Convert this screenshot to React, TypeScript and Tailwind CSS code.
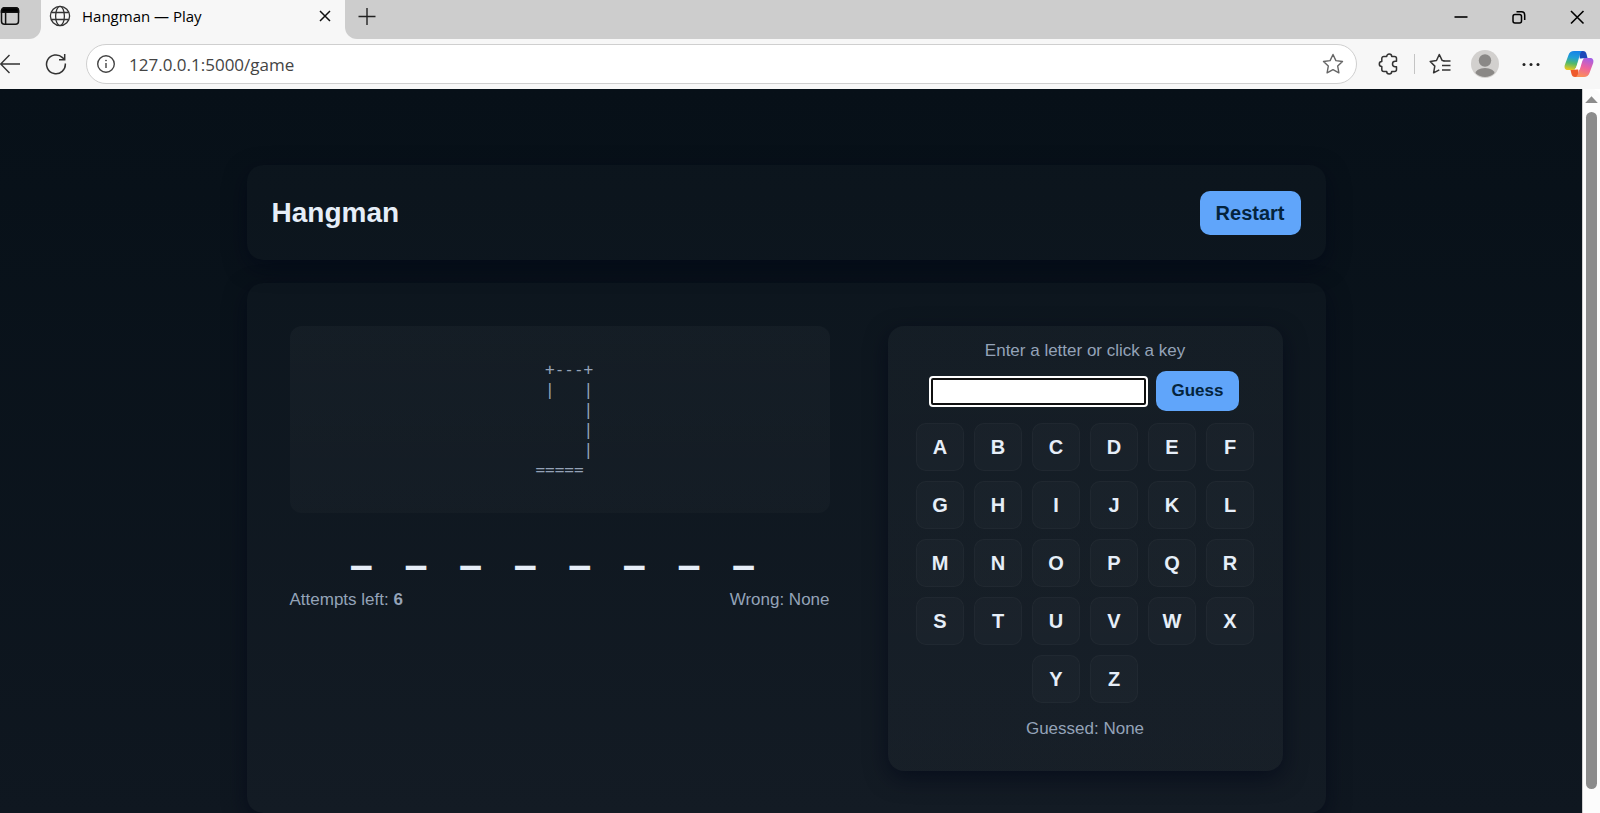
import React from "react";

const LETTERS = "ABCDEFGHIJKLMNOPQRSTUVWXYZ".split("");
const GALLOWS = ["  +---+", "  |   |", "      |", "      |", "      |", "====="].join("\n");

function TabStrip() {
  return (
    <div className="flex h-[39px] items-stretch bg-[#cdcdcd] text-black">
      <div className="flex bg-[#f7f7f7]">
        <button aria-label="Tab actions" className="flex w-[41px] items-center rounded-br-xl bg-[#cdcdcd] pb-[7px]">
          <svg width="20" height="20" viewBox="0 0 20 20" fill="none" stroke="#111" strokeWidth="1.5">
            <rect x="1.5" y="1.8" width="17" height="16.5" rx="3" />
            <path d="M1.5 4.8a3 3 0 0 1 3-3h11a3 3 0 0 1 3 3v1.4h-17z" fill="#000" />
            <path d="M5.6 6v12" />
          </svg>
        </button>
      </div>
      <div className="flex bg-[#cdcdcd]">
        <div className="flex w-[304px] items-center bg-[#f7f7f7] pb-[7px] pl-2 pr-3">
          <svg width="22" height="22" viewBox="0 0 22 22" fill="none" stroke="#333" strokeWidth="1.3">
            <circle cx="11" cy="11" r="9.6" />
            <ellipse cx="11" cy="11" rx="4.4" ry="9.6" />
            <path d="M2.2 7.5h17.6M2.2 14.5h17.6" />
          </svg>
          <span className="ml-[11px] flex-1 text-[15px] leading-5">Hangman — Play</span>
          <button aria-label="Close tab">
            <svg width="16" height="16" viewBox="0 0 16 16" stroke="#111" strokeWidth="1.5">
              <path d="M3 3l10 10M13 3L3 13" />
            </svg>
          </button>
        </div>
      </div>
      <div className="flex flex-1 bg-[#f7f7f7]">
        <div className="flex flex-1 items-center justify-between rounded-bl-xl bg-[#cdcdcd] pb-[5px] pr-[15px]">
          <button aria-label="New tab" className="ml-3">
            <svg width="20" height="20" viewBox="0 0 20 20" stroke="#222" strokeWidth="1.4">
              <path d="M10 1v17M1.5 9.500h17" />
            </svg>
          </button>
          <div className="flex items-center gap-[42px]">
            <button aria-label="Minimize">
              <svg width="16" height="16" viewBox="0 0 16 16" stroke="#000" strokeWidth="1.6">
                <path d="M1.5 8h13" />
              </svg>
            </button>
            <button aria-label="Restore">
              <svg width="16" height="16" viewBox="0 0 16 16" fill="none" stroke="#000" strokeWidth="1.5">
                <rect x="2" y="5.5" width="8.5" height="8.5" rx="2" />
                <path d="M5.5 2.8h5a3.2 3.2 0 0 1 3.2 3.2v5" />
              </svg>
            </button>
            <button aria-label="Close window">
              <svg width="16" height="16" viewBox="0 0 16 16" stroke="#000" strokeWidth="1.6">
                <path d="M2 2l12.500 12.500M14.500 2L2 14.500" />
              </svg>
            </button>
          </div>
        </div>
      </div>
    </div>
  );
}

function CopilotLogo() {
  return (
    <svg width="30" height="28" viewBox="0 0 30 28">
      <defs>
        <linearGradient id="coolRibbon" x1="0.5" y1="0" x2="0.35" y2="1">
          <stop offset="0" stopColor="#1583e8" />
          <stop offset="0.35" stopColor="#1f9fd6" />
          <stop offset="0.65" stopColor="#52b96a" />
          <stop offset="1" stopColor="#eec81e" />
        </linearGradient>
        <linearGradient id="warmRibbon" x1="0.7" y1="0" x2="0.4" y2="1">
          <stop offset="0" stopColor="#a45fe6" />
          <stop offset="0.5" stopColor="#ec62a0" />
          <stop offset="1" stopColor="#fb8f58" />
        </linearGradient>
      </defs>
      <path d="M15 1h4c2 0 3 1 3.500 3l1.100 4.500h-3.300c-2 0-3.300.3-4.300 1.500z" fill="#1c49b8" />
      <path d="M15 27h-4c-2 0-3-1-3.500-3l-1.100-4.500h3.300c2 0 3.300-.3 4.300-1.500z" fill="#ee5a2c" />
      <path d="M10 1h9c-1.800 0-2.500 1.400-3 3.200l-3.300 11.300c-.8 2.900-1.900 4.500-4.700 4.500H4c-2.800 0-4-2-3.200-5L4.500 5C5.400 2.400 7.200 1 10 1z" fill="url(#coolRibbon)" />
      <path d="M20 27h-9c1.800 0 2.500-1.400 3-3.200l3.300-11.300c.8-2.900 1.900-4.500 4.700-4.500h4c2.800 0 4 2 3.200 5l-3.700 10c-.9 2.600-2.700 4-5.500 4z" fill="url(#warmRibbon)" />
      <path d="M15.500 8.500h4.400c-.9.900-1.500 2.200-1.900 3.600l-2.200 7.400h-4.900c.9-.9 1.500-2.200 1.900-3.600z" fill="#fff" />
    </svg>
  );
}

function Toolbar() {
  return (
    <div className="flex h-[50px] items-center bg-[#f7f7f7] pr-[6px]">
      <button aria-label="Back">
        <svg width="21" height="22" viewBox="0 0 21 22" fill="none" stroke="#333" strokeWidth="1.4">
          <path d="M20 11H1M9.500 2L.7 11l8.800 9" />
        </svg>
      </button>
      <button aria-label="Refresh" className="ml-6">
        <svg width="22" height="22" viewBox="0 0 22 22" fill="none" stroke="#333" strokeWidth="1.5">
          <path d="M20.300 10.500A9.400 9.400 0 1 1 17.500 4.600L19.500 6.500" />
          <path d="M19.700 1v5.700h-5.700" />
        </svg>
      </button>
      <div className="ml-[19px] flex h-10 flex-1 items-center rounded-full border border-[#cfcfcf] bg-white pl-[9px] pr-[12px]">
        <svg width="20" height="20" viewBox="0 0 20 20" fill="none" stroke="#444" strokeWidth="1.4">
          <circle cx="10" cy="10" r="8.300" />
          <path d="M10 9v5" />
          <circle cx="10" cy="6.500" r=".5" fill="#444" strokeWidth=".8" />
        </svg>
        <input
          aria-label="Address"
          defaultValue="127.0.0.1:5000/game"
          className="ml-[13px] min-w-0 flex-1 bg-transparent pt-px text-[17px] leading-6 text-[#444] outline-none"
        />
        <button aria-label="Add to favorites">
          <svg width="22" height="22" viewBox="0 0 22 22" fill="none" stroke="#666" strokeWidth="1.4" strokeLinejoin="round">
            <path d="M11 1.500l2.900 6.100 6.600.9-4.800 4.600 1.200 6.700L11 16.600l-5.900 3.200 1.200-6.700L1.500 8.500l6.600-.9z" />
          </svg>
        </button>
      </div>
      <button aria-label="Extensions" className="ml-[21px]">
        <svg width="22" height="22" viewBox="0 0 22 22" fill="none" stroke="#333" strokeWidth="1.5" strokeLinejoin="round">
          <path d="M5.800 3.500H8.700a2.500 2.500 0 0 1 5 0h2.800a2 2 0 0 1 2 2v2.800h-1.300a2.700 2.700 0 0 0 0 5.400h1.300v2.800a2 2 0 0 1-2 2h-2.800a2.500 2.500 0 0 1-5 0H5.800a2 2 0 0 1-2-2v-3a2.500 2.500 0 0 1 0-5v-3a2 2 0 0 1 2-2z" />
        </svg>
      </button>
      <div className="ml-[14px] h-5 w-px bg-[#c4c4c4]" />
      <button aria-label="Favorites" className="ml-[14px]">
        <svg width="22" height="22" viewBox="0 0 22 22" fill="none" stroke="#333" strokeWidth="1.500" strokeLinejoin="round">
          <path d="M15.500 7.700l-2.400-.3L10.300 1.500 7.500 7.500l-6.300 1 4.600 4.600-1.200 6.700 5.700-3" />
          <path d="M14.300 8h7.200M13 12.500h8.500M13 17h8.500" />
        </svg>
      </button>
      <button aria-label="Profile" className="ml-5">
        <svg width="28" height="28" viewBox="0 0 28 28">
          <defs>
            <clipPath id="avatarClip">
              <circle cx="14" cy="14" r="13" />
            </clipPath>
          </defs>
          <circle cx="14" cy="14" r="14" fill="#d2d0ce" />
          <circle cx="14" cy="10.500" r="6.200" fill="#8a8886" />
          <ellipse cx="14" cy="24" rx="10" ry="6" fill="#8a8886" clipPath="url(#avatarClip)" />
        </svg>
      </button>
      <button aria-label="Settings and more" className="ml-[23px]">
        <svg width="18" height="18" viewBox="0 0 18 18" fill="#222">
          <circle cx="2" cy="9.500" r="1.500" />
          <circle cx="9" cy="9.500" r="1.500" />
          <circle cx="16" cy="9.500" r="1.500" />
        </svg>
      </button>
      <button aria-label="Copilot" className="ml-[24px]">
        <CopilotLogo />
      </button>
    </div>
  );
}

function Scrollbar() {
  return (
    <div className="flex w-[18px] shrink-0 flex-col items-center rounded-tr-lg border-l border-[#d0d0d0] bg-[#fcfcfc] pt-[7px]" aria-hidden="true">
      <svg width="13" height="7" viewBox="0 0 13 7" fill="#8b8b8b">
        <path d="M6.500 0.300L12.800 7H.2z" />
      </svg>
      <div className="mb-6 mt-[9px] w-[11px] flex-1 rounded-full bg-[#8b8b8b]" />
    </div>
  );
}

function Gallows() {
  return (
    <section className="min-w-0 flex-1">
      <pre className="rounded-xl bg-linear-to-b from-white/3 to-white/2 pb-[33px] pt-[34px] text-center font-['DejaVu_Sans_Mono',monospace] text-[16px] leading-5 text-[#94a3b8]">
        {GALLOWS}
      </pre>
      <div className="mt-[11px] flex justify-center gap-[34px] pr-[14px] font-['Roboto',sans-serif] text-[46px] font-medium leading-[52px] text-[#e6eef8]">
        {Array.from({ length: 8 }, (_, i) => (
          <span key={i}>_</span>
        ))}
      </div>
      <div className="mt-3 flex justify-between text-[17px] leading-6 text-[#94a3b8]">
        <p>
          Attempts left: <strong>6</strong>
        </p>
        <p>Wrong: None</p>
      </div>
    </section>
  );
}

function Keyboard() {
  return (
    <section className="w-[395px] shrink-0 rounded-2xl bg-linear-to-b from-white/3 to-white/2 px-6 pb-[30px] pt-[13px] text-center shadow-[0_7px_22px_rgba(2,6,23,0.6)]">
      <label htmlFor="guess" className="block text-[17px] leading-6 text-[#94a3b8]">
        Enter a letter or click a key
      </label>
      <form className="mt-2 flex items-center justify-center gap-[10px]" onSubmit={(e) => e.preventDefault()}>
        <input
          id="guess"
          maxLength={1}
          className="h-[27px] w-[215px] rounded-xs border-2 border-[#101010] bg-white outline-2 outline-white"
        />
        <button className="h-10 rounded-[10px] bg-[#60a5fa] px-4 text-[17px] font-bold text-[#04243d]">Guess</button>
      </form>
      <div className="mt-3 flex flex-wrap justify-center gap-[10px]">
        {LETTERS.map((l) => (
          <button
            key={l}
            className="size-12 rounded-[10px] border border-white/3 bg-white/2 text-[20px] font-bold text-[#e6eef8]"
          >
            {l}
          </button>
        ))}
      </div>
      <p className="mt-[14px] text-[17px] leading-6 text-[#94a3b8]">Guessed: None</p>
    </section>
  );
}

export default function App() {
  return (
    <div className="flex h-screen flex-col overflow-hidden font-['Open_Sans',sans-serif]">
      <TabStrip />
      <Toolbar />
      <div className="flex min-h-0 flex-1">
        <div className="min-w-0 flex-1 overflow-hidden bg-linear-to-b from-[#071018] to-[#0f1720] px-1 pr-[14px] pt-[76px] font-['Liberation_Sans',Arial,sans-serif]">
          <div className="mx-auto max-w-[1079px]">
            <header className="flex h-[95px] items-center justify-between rounded-2xl bg-white/2 px-[25px] shadow-[0_7px_22px_rgba(2,6,23,0.6)]">
              <h1 className="text-[28px] font-bold text-[#e6eef8]">Hangman</h1>
              <button className="h-11 rounded-[10px] bg-[#60a5fa] px-4 text-[20px] font-bold text-[#04243d]">Restart</button>
            </header>
            <main className="mt-[23px] flex items-start gap-[58px] rounded-2xl bg-white/2 px-[43px] pb-[42px] pt-[43px] shadow-[0_7px_22px_rgba(2,6,23,0.6)]">
              <Gallows />
              <Keyboard />
            </main>
          </div>
        </div>
        <Scrollbar />
      </div>
    </div>
  );
}
